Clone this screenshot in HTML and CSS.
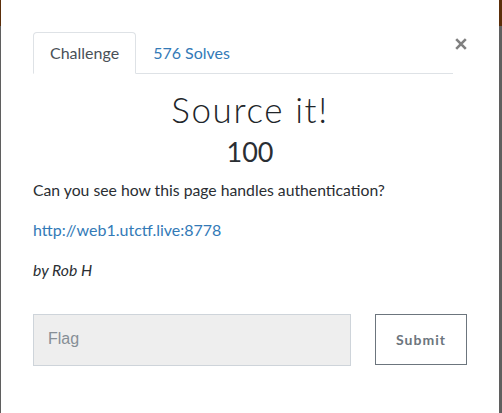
FILE: index.html
```html
<!DOCTYPE html>
<html>
<head>
<meta charset="utf-8">
<link rel="stylesheet" href="styles.css">
</head>
<body>
<div class="modal">
  <div class="header">
    <div class="tabs">
      <span class="tab active">Challenge</span>
      <a class="tab" href="#">576 Solves</a>
    </div>
    <button class="close" aria-label="Close">
      <svg width="12" height="12" viewBox="0 0 12 12"><path d="M1.2 1.2 L10.8 10.8 M10.8 1.2 L1.2 10.8" stroke="#808080" stroke-width="2.6" stroke-linecap="butt"/></svg>
    </button>
  </div>
  <h1 class="title">Source it!</h1>
  <div class="value">100</div>
  <p class="desc">Can you see how this page handles authentication?</p>
  <p class="desc"><a class="link" href="#">http://web1.utctf.live:8778</a></p>
  <p class="desc author">by Rob H</p>
  <form class="submit-row">
    <input class="flag" type="text" placeholder="Flag">
    <button class="submit" type="button">Submit</button>
  </form>
</div>
</body>
</html>
```
FILE: styles.css
```css
html, body {
  margin: 0;
  height: 100%;
}
body {
  background: linear-gradient(#5b2e0a 0, #5b2e0a 26px, #5f5f5f 26px);
  font-family: Lato, "Liberation Sans", sans-serif;
  color: #212529;
  overflow: hidden;
}
.modal {
  margin: 0 3px 0 1px;
  background: #fff;
  height: 413px;
  box-sizing: border-box;
  padding: 32px 32px 0 32px;
}
.header {
  display: flex;
  align-items: flex-start;
}
.tabs {
  flex: 1;
  display: flex;
  border-bottom: 1px solid #dee2e6;
}
.tab {
  display: block;
  font-size: 16px;
  line-height: 24px;
  padding: 8px 16px;
  border: 1px solid transparent;
  border-top-left-radius: 4px;
  border-top-right-radius: 4px;
  margin-bottom: -1px;
  color: #337ab7;
  text-decoration: none;
}
.tab.active {
  color: #495057;
  border-color: #dee2e6 #dee2e6 #fff;
  background: #fff;
}
.close {
  border: 0;
  background: none;
  padding: 6px 0 0 2px;
  margin: 0;
  width: 14px;
  cursor: pointer;
  line-height: 0;
}
.title {
  margin: 14px 0 0;
  text-align: center;
  font-weight: 300;
  font-size: 35px;
  line-height: 42px;
  letter-spacing: 1.6px;
  color: #212529;
}
.value {
  margin-top: 5px;
  text-align: center;
  font-size: 27px;
  line-height: 34px;
  font-weight: 400;
  color: #2a2e33;
}
.desc {
  margin: 9px 0 16px;
  font-size: 15.75px;
  line-height: 24px;
  color: #2a2e33;
}
.desc + .desc {
  margin-top: 0;
}
.link {
  color: #337ab7;
  text-decoration: none;
  font-size: 16px;
}
.author {
  font-style: italic;
}
.submit-row {
  display: flex;
  gap: 24px;
  margin-top: 32px;
}
.flag {
  width: 318px;
  height: 52px;
  box-sizing: border-box;
  border: 1px solid #ced4da;
  background: #eeeeee;
  padding: 0 14px 3px;
  font-family: "Liberation Sans", Arial, sans-serif;
  font-size: 16px;
  color: #495057;
  margin: 0;
}
.flag::placeholder {
  color: #868e96;
}
.submit {
  width: 92px;
  height: 51px;
  box-sizing: border-box;
  border: 1px solid #6c757d;
  background: #fff;
  color: #6c757d;
  font-family: Lato, sans-serif;
  font-weight: 700;
  font-size: 14px;
  letter-spacing: 1px;
  margin: 0;
  padding: 0;
}
```
